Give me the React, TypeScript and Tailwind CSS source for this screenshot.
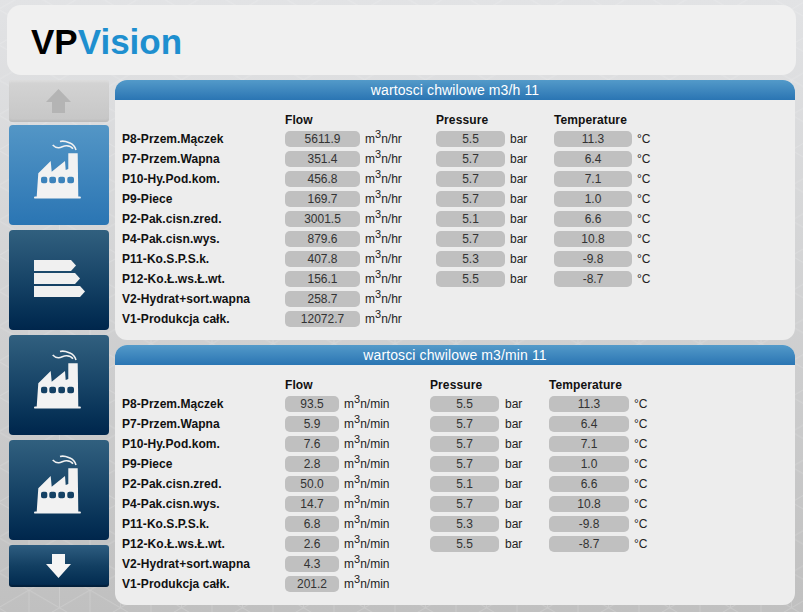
const sans = "font-['Liberation_Sans',Arial,sans-serif]";

const names = [
  "P8-Przem.Mączek",
  "P7-Przem.Wapna",
  "P10-Hy.Pod.kom.",
  "P9-Piece",
  "P2-Pak.cisn.zred.",
  "P4-Pak.cisn.wys.",
  "P11-Ko.S.P.S.k.",
  "P12-Ko.Ł.ws.Ł.wt.",
  "V2-Hydrat+sort.wapna",
  "V1-Produkcja całk.",
];

const flowHour = ["5611.9", "351.4", "456.8", "169.7", "3001.5", "879.6", "407.8", "156.1", "258.7", "12072.7"];
const flowMin = ["93.5", "5.9", "7.6", "2.8", "50.0", "14.7", "6.8", "2.6", "4.3", "201.2"];
const pressure = ["5.5", "5.7", "5.7", "5.7", "5.1", "5.7", "5.3", "5.5"];
const temperature = ["11.3", "6.4", "7.1", "1.0", "6.6", "10.8", "-9.8", "-8.7"];

function Factory() {
  return (
    <svg width="48" height="59" viewBox="0 0 48 59" fill="#f2f2f2">
      <path d="M26 1.500c4-1.200 7 .3 10 1.500 3 1.300 5 3.500 6 7" fill="none" stroke="#f2f2f2" strokeWidth="1.600" />
      <path d="M18.700 5c2 2 3.500 3 6 2.800 3-.3 5-2.300 8-2 2.500.2 5 1.200 6.300 3" fill="none" stroke="#f2f2f2" strokeWidth="1.600" />
      <path
        fillRule="evenodd"
        d="M1 58.500c-.6 0-1-.4-1-1 0-.5.400-.9 1-.9h1.700L4.300 33.300 16.700 21l1 10.700L31 21l.7 9 2.600-1 0-15.700h9.400l.6 43.300H46c.5 0 .9.400.9.900 0 .6-.4 1-.9 1z M9 36.700a2 2 0 0 0-2 2v2.600a2 2 0 0 0 2 2h2.300a2 2 0 0 0 2-2v-2.600a2 2 0 0 0-2-2z M17.300 36.700a2 2 0 0 0-2 2v2.600a2 2 0 0 0 2 2H20a2 2 0 0 0 2-2v-2.600a2 2 0 0 0-2-2z M26.300 36.700a2 2 0 0 0-2 2v2.600a2 2 0 0 0 2 2H29a2 2 0 0 0 2-2v-2.600a2 2 0 0 0-2-2z M35.300 36.700a2 2 0 0 0-2 2v2.600a2 2 0 0 0 2 2H38a2 2 0 0 0 2-2v-2.600a2 2 0 0 0-2-2z"
      />
    </svg>
  );
}

function Tags() {
  return (
    <svg className="ml-[3px]" width="51" height="37" viewBox="0 0 51 37" fill="#f0f0f0">
      <path d="M0 0h37l5 5.500-5 5.500H0z" />
      <path d="M0 13h41l5 5.500-5 5.500H0z" />
      <path d="M0 26h46l5 5.500-5 5.500H0z" />
    </svg>
  );
}

function Arrow({ fill, down }: { fill: string; down?: boolean }) {
  return (
    <svg className="mr-[2px]" width="25" height="24" viewBox="0 0 25 24" fill={fill}>
      {down ? <path d="M6 0h13v10h6L12.500 24 0 10h6z" /> : <path d="M12.500 0 25 13h-6v11H6V13H0z" />}
    </svg>
  );
}

function NavButton({ children, tone, top }: { children: React.ReactNode; tone: "dark" | "blue"; top: string }) {
  return (
    <div
      className={`flex h-[100px] w-[100px] justify-center rounded-[4px] ${top} ${
        tone === "blue"
          ? "bg-linear-to-b from-[#5396c6] to-[#2a75b3]"
          : "bg-linear-to-b from-[#31607f] via-[#174467] to-[#00264c]"
      }`}
    >
      <div className="ml-[-2px]">{children}</div>
    </div>
  );
}

function Pill({ value, width }: { value: string; width: string }) {
  return (
    <div className={`${width} h-[16px] rounded-[5px] bg-[#c0c0c0] text-center text-[12px] leading-[16px] text-[#333]`}>
      {value}
    </div>
  );
}

function Unit3({ unit }: { unit: string }) {
  return (
    <span className="text-[12px] leading-[16px] text-[#222]">
      m<sup className="text-[11px] leading-none">3</sup>
      {unit}
    </span>
  );
}

function Column({ heading, className, children }: { heading: string; className: string; children: React.ReactNode }) {
  return (
    <div className={className}>
      <div className="h-[18px] text-[12px] leading-[18px] font-bold tracking-[0.1px] text-[#111]">{heading}</div>
      {children}
    </div>
  );
}

function Panel({
  title,
  flow,
  unit,
  flowW,
  flowCol,
  pressW,
  pressCol,
  pressGap,
  tempW,
  tempCol,
}: {
  title: string;
  flow: string[];
  unit: string;
  flowW: string;
  flowCol: string;
  pressW: string;
  pressCol: string;
  pressGap: string;
  tempW: string;
  tempCol: string;
}) {
  return (
    <section className="h-[260px] overflow-hidden rounded-[12px] bg-[#ededed]">
      <h2 className="h-[20px] bg-linear-to-b from-[#539ac9] to-[#2a75b3] text-center text-[14px] leading-[20px] font-normal tracking-[0.12px] text-white">
        {title}
      </h2>
      <div className="flex pt-[11px] pl-[7px]">
        <div className="w-[163px] pt-[18px]">
          {names.map((n) => (
            <div key={n} className="h-[20px] text-[12px] leading-[20px] font-bold tracking-[0.05px] text-[#111]">
              {n}
            </div>
          ))}
        </div>
        <Column heading="Flow" className={flowCol}>
          {flow.map((v) => (
            <div key={v} className="flex h-[20px] items-center gap-[5px]">
              <Pill value={v} width={flowW} />
              <Unit3 unit={unit} />
            </div>
          ))}
        </Column>
        <Column heading="Pressure" className={pressCol}>
          {pressure.map((v, i) => (
            <div key={i} className={`flex h-[20px] items-center ${pressGap}`}>
              <Pill value={v} width={pressW} />
              <span className="text-[12px] leading-[16px] text-[#222]">bar</span>
            </div>
          ))}
        </Column>
        <Column heading="Temperature" className={tempCol}>
          {temperature.map((v, i) => (
            <div key={i} className="flex h-[20px] items-center gap-[5px]">
              <Pill value={v} width={tempW} />
              <span className="text-[12px] leading-[16px] text-[#222]">°C</span>
            </div>
          ))}
        </Column>
      </div>
    </section>
  );
}

export default function App() {
  return (
    <div className={`${sans} relative h-[612px] w-[803px] overflow-hidden bg-linear-to-b from-[#e2e3e5] to-[#c0c0c0]`}>
      {/* faint lattice behind everything */}
      <svg className="absolute inset-0" width="803" height="612">
        <defs>
          <pattern id="lattice" width="61" height="70.400" patternUnits="userSpaceOnUse" patternTransform="translate(29 27)">
            <path
              d="M0 0 61 35.200M0 35.200 61 0M0 35.200 61 70.400M0 70.400 61 35.200M0 0V35.200M61 0V35.200M30.500 52.800V70.400M30.500 0V17.600"
              fill="none"
              stroke="#ffffff"
              strokeOpacity="0.16"
              strokeWidth="1"
            />
          </pattern>
        </defs>
        <rect width="803" height="612" fill="url(#lattice)" />
      </svg>
      <div className="relative pt-[5px] pl-[7px]">
        <header className="flex h-[70px] w-[789px] items-center rounded-[14px] bg-[#f0f0f0] pt-[2px] pl-[24px]">
          <span className="text-[35px] leading-none font-bold">
            <span className="text-black">VP</span>
            <span className="text-[#1e8fcf]">Vision</span>
          </span>
        </header>
        <div className="mt-[5px] flex">
          <nav className="ml-[2px] flex w-[100px] flex-col">
            <div className="flex h-[42px] items-center justify-center rounded-[3px] bg-linear-to-b from-[#d4d4d4] to-[#c6c6c6] shadow-[inset_0_2px_2px_rgba(255,255,255,0.2),inset_0_-2px_2px_rgba(0,0,0,0.05)]">
              <Arrow fill="#b4b4b4" />
            </div>
            <div className="mt-[3px]">
              <NavButton tone="blue" top="pt-[15px]">
                <Factory />
              </NavButton>
            </div>
            <div className="mt-[5px]">
              <NavButton tone="dark" top="pt-[30px]">
                <Tags />
              </NavButton>
            </div>
            <div className="mt-[5px]">
              <NavButton tone="dark" top="pt-[15px]">
                <Factory />
              </NavButton>
            </div>
            <div className="mt-[5px]">
              <NavButton tone="dark" top="pt-[15px]">
                <Factory />
              </NavButton>
            </div>
            <div className="mt-[5px] flex h-[42px] items-center justify-center rounded-[3px] bg-linear-to-b from-[#2e5d80] via-[#123f62] to-[#02294e] shadow-[inset_0_-2px_1px_rgba(0,0,0,0.25)]">
              <Arrow fill="#f5f5f5" down />
            </div>
          </nav>
          <main className="ml-[6px] flex w-[680px] flex-col gap-[5px]">
            <Panel
              title="wartosci chwilowe m3/h 11"
              flow={flowHour}
              unit="n/hr"
              flowW="w-[75px]"
              flowCol="w-[151px]"
              pressW="w-[69px]"
              pressCol="w-[118px]"
              pressGap="gap-[5px]"
              tempW="w-[78px]"
              tempCol="w-[120px]"
            />
            <Panel
              title="wartosci chwilowe m3/min 11"
              flow={flowMin}
              unit="n/min"
              flowW="w-[54px]"
              flowCol="w-[145px]"
              pressW="w-[69px]"
              pressCol="w-[119px]"
              pressGap="gap-[6px]"
              tempW="w-[80px]"
              tempCol="w-[120px]"
            />
          </main>
        </div>
      </div>
    </div>
  );
}
